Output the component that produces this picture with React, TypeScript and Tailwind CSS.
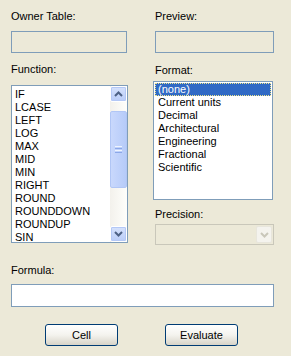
import React from "react";

const functions = ["IF", "LCASE", "LEFT", "LOG", "MAX", "MID", "MIN", "RIGHT", "ROUND", "ROUNDDOWN", "ROUNDUP", "SIN"];
const formats = ["(none)", "Current units", "Decimal", "Architectural", "Engineering", "Fractional", "Scientific"];

const Chevron = ({ up = false, color = "#4D6185" }: { up?: boolean; color?: string }) => (
  <svg width="9" height="6" viewBox="0 0 9 6">
    <polyline
      points={up ? "1,5 4.5,1.5 8,5" : "1,1 4.5,4.5 8,1"}
      fill="none"
      stroke={color}
      strokeWidth="2"
    />
  </svg>
);

const ScrollButton = ({ up = false }: { up?: boolean }) => (
  <div className="h-[16px] flex items-center justify-center rounded-[2px] border border-white bg-gradient-to-b from-[#D6E2FC] to-[#B9CCF8] shadow-[inset_0_0_0_1px_#B4C8F6]">
    <Chevron up={up} />
  </div>
);

const XpButton = ({ label }: { label: string }) => (
  <button className="w-[73px] h-[22px] rounded-[3px] border border-[#003C74] bg-gradient-to-b from-white via-[#F4F3EE] to-[#D8D4C8] text-[11px] text-black leading-none">
    {label}
  </button>
);

export default function App() {
  return (
    <div className="w-[291px] h-[356px] bg-[#ECE9D8] pl-[11px] text-[11px] leading-[13px] text-black font-['Liberation_Sans',Arial,sans-serif]">
      <div className="flex gap-[28px]">
        {/* left column */}
        <div className="w-[116px] flex flex-col">
          <div className="mt-[10px]">Owner Table:</div>
          <div className="mt-[8px] h-[22px] border border-[#7F9DB9]" />
          <div className="mt-[10px]">Function:</div>
          <div className="mt-[9px] h-[158px] w-[117px] border border-[#7F9DB9] bg-white flex">
            <div className="flex-1 pt-[2px] pl-[3px]">
              {functions.map((f) => (
                <div key={f} className="h-[13px]">{f}</div>
              ))}
            </div>
            <div className="w-[17px] flex flex-col bg-gradient-to-r from-[#F3F1EC] to-[#FEFEFB]">
              <ScrollButton up />
              <div className="h-[9px]" />
              <div className="h-[77px] rounded-[2px] border border-[#B1C6F5] bg-gradient-to-r from-[#C9D8FC] to-[#B6CBF9] flex flex-col items-center justify-center gap-[1px]">
                <div className="w-[7px] h-[1px] bg-[#EEF4FE]" />
                <div className="w-[7px] h-[1px] bg-[#8CA8E8]" />
                <div className="w-[7px] h-[1px] bg-[#EEF4FE]" />
                <div className="w-[7px] h-[1px] bg-[#8CA8E8]" />
              </div>
              <div className="flex-1" />
              <ScrollButton />
            </div>
          </div>
        </div>

        {/* right column */}
        <div className="w-[119px] flex flex-col">
          <div className="mt-[10px]">Preview:</div>
          <div className="mt-[8px] h-[22px] border border-[#7F9DB9]" />
          <div className="mt-[11px]">Format:</div>
          <div className="mt-[4px] -ml-[2px] h-[119px] w-[120px] border border-[#7F9DB9] bg-white p-[1px]">
            {formats.map((f, i) => (
              <div
                key={f}
                className={
                  i === 0
                    ? "h-[13px] pl-[2px] bg-[#316AC5] text-white border border-dotted border-[#F0E68C] leading-[11px]"
                    : "h-[13px] pl-[3px]"
                }
              >
                {f}
              </div>
            ))}
          </div>
          <div className="mt-[8px]">Precision:</div>
          <div className="mt-[3px] h-[21px] border border-[#C9C7BA] flex justify-end p-[1px]">
            <div className="w-[16px] flex items-center justify-center rounded-[2px] border border-[#E8E6DC] bg-[#F4F3EE]">
              <Chevron color="#C9C7BA" />
            </div>
          </div>
        </div>
      </div>

      <div className="mt-[19px]">Formula:</div>
      <div className="mt-[7px] h-[23px] w-[263px] border border-[#7F9DB9] bg-white" />

      <div className="mt-[17px] flex gap-[47px] pl-[34px]">
        <XpButton label="Cell" />
        <XpButton label="Evaluate" />
      </div>
    </div>
  );
}
